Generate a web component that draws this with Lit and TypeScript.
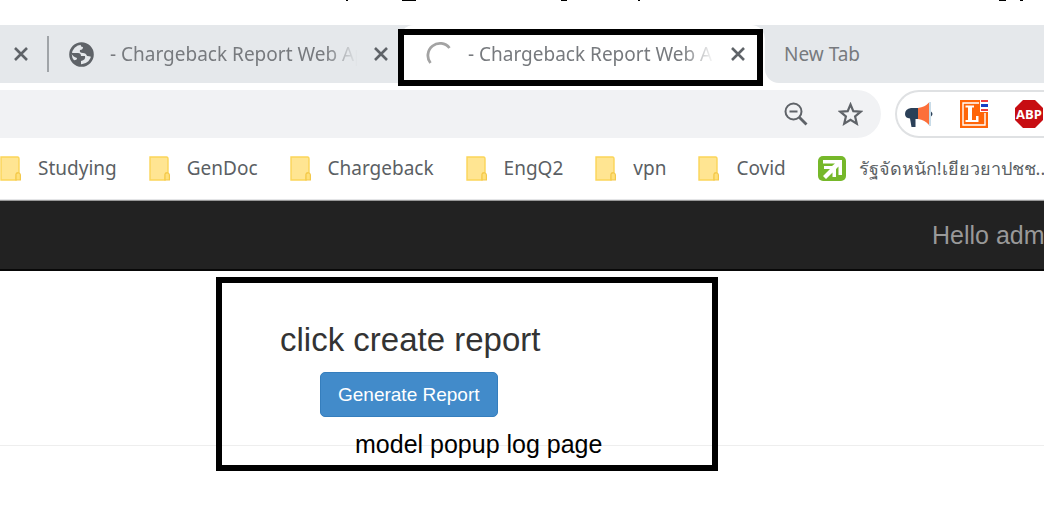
import { LitElement, html, svg, css } from "lit";
import { customElement } from "lit/decorators.js";

const closeIcon = html`<svg width="14" height="14" viewBox="0 0 14 14" aria-hidden="true"><path d="M1 1 13 13M13 1 1 13" fill="none" stroke="#5f6368" stroke-width="2.6"/></svg>`;
const folderIcon = html`<svg width="21" height="25" viewBox="0 0 21 25" aria-hidden="true"><path d="M1 1H17.500Q19 1 19 3V17H17Q16 17.500 16 24H1Z" fill="#ffe592" stroke="#fbd558" stroke-width="1.400"/><path d="M16 24V18Q17 16.500 19 17Q20.400 17.500 20.400 19V24Z" fill="#ffe07a" stroke="#f3c84a" stroke-width="1.200"/></svg>`;
const folders = ["Studying", "GenDoc", "Chargeback", "EngQ2", "vpn", "Covid"];
const marks: [number, number, number][] = [[346, 2, 1], [402, 14, 1], [561, 6, 1], [638, 2, 1], [999, 7, 1], [1020, 3, 1]];

@customElement("app-root")
export class AppRoot extends LitElement {
  static styles = css`
    :host { display: block; position: relative; overflow: hidden; min-height: 100vh; background: #fff; font-family: "Noto Sans", sans-serif; color: #5f6368; }
    * { box-sizing: border-box; }
    svg { display: block; flex: none; }
    button { font: inherit; border: 0; padding: 0; background: none; color: inherit; }
    a { color: inherit; text-decoration: none; }
    .remnant { height: 25px; }
    .tabs { display: flex; height: 58px; background: #e5e8eb; font-size: 19px; color: #777a7e; }
    .tab { display: flex; align-items: center; white-space: nowrap; }
    .first { width: 47px; padding-left: 14px; }
    .second { width: 353px; padding: 0 12px 0 20px; border-left: 2px solid #a0a4a8; border-image: linear-gradient(transparent 12px, #a0a4a8 12px, #a0a4a8 46px, transparent 46px) 1; }
    .active { width: 365px; padding: 0 20px 0 26px; border-radius: 14px 14px 0 0; background: #fff; }
    .name { flex: 1; overflow: hidden; margin: 0 14px 0 16px; mask-image: linear-gradient(90deg, #000 86%, transparent 99%); }
    .restwrap { flex: 1; display: flex; background: linear-gradient(#e5e8eb 50%, #fff 50%); }
    .rest { flex: 1; padding-left: 19px; border-bottom-left-radius: 14px; background: #e5e8eb; }
    .toolbar { display: flex; height: 62px; padding-top: 7px; gap: 14px; }
    .address { flex: 1; height: 48px; display: flex; align-items: center; justify-content: flex-end; gap: 30px; padding-right: 18px; border-radius: 0 24px 24px 0; background: #f1f2f4; }
    .address input { flex: 1; min-width: 0; border: 0; background: none; }
    .extensions { width: 149px; height: 48px; display: flex; align-items: center; gap: 27px; padding-left: 8px; border: 2px solid #dfe1e3; border-right: 0; border-radius: 24px 0 0 24px; }
    .bookmarks { display: flex; align-items: center; height: 55px; padding-bottom: 8px; gap: 32px; font-size: 19px; color: #5b5f64; border-bottom: 1px solid #e4e5e7; white-space: nowrap; }
    .bookmark { display: flex; align-items: center; gap: 17px; flex: none; }
    .thai { gap: 13px; font-size: 18px; }
    .navbar { height: 71px; display: flex; align-items: center; justify-content: flex-end; background: #222; border-top: 1px solid #999; border-bottom: 2px solid #080808; font: 25px "Liberation Sans", sans-serif; color: #999; white-space: nowrap; overflow: hidden; }
    .hello { width: 112px; }
    main { font-family: "Liberation Sans", sans-serif; height: 175px; padding: 48px 0 0 280px; border-bottom: 1px solid #eee; }
    h1 { margin: 0; font-size: 33px; line-height: 42px; font-weight: 400; color: #333; }
    .generate { display: block; height: 45px; margin: 11px 0 0 40px; padding: 0 17px; border: 1px solid #357ebd; border-radius: 5px; background: #428bca; color: #fff; font-size: 19px; }
    .note { margin: 12px 0 0 75px; font-size: 25px; line-height: 30px; color: #000; }
    .frame { position: absolute; border: 6px solid #000; pointer-events: none; }
    .frame-tab { left: 398px; top: 29px; width: 365px; height: 57px; }
    .frame-page { left: 216px; top: 277px; width: 502px; height: 194px; }
  `;

  render() {
    return html`
      <svg class="remnant" width="1044" height="25" aria-hidden="true">${marks.map(([x, w, h]) => svg`<rect x=${x} y="0" width=${w} height=${h}/>`)}</svg>
      <nav class="tabs" aria-label="Tabs">
        <div class="tab first"><button aria-label="Close tab">${closeIcon}</button></div>
        <div class="tab second">
          <svg width="25" height="25" viewBox="0 0 25 25" aria-hidden="true"><circle cx="12.500" cy="12.500" r="11" fill="none" stroke="#5f6368" stroke-width="2.600"/><path d="M12 2Q18 1 21 5T23 15Q20 14 18 14Q17 11 14 11Q10 11 11 8Q14 8 14 5Q11 5 12 2ZM2 11H9Q12 11 12 14H16Q17 18 12 19V23Q6 23 3 18Q8 19 8 16Q4 15 2 11Z" fill="#5f6368"/></svg>
          <span class="name">- Chargeback Report Web App</span><button aria-label="Close tab">${closeIcon}</button>
        </div>
        <div class="tab active">
          <svg width="26" height="26" viewBox="0 0 26 26" aria-hidden="true"><path d="M4.500 22A11.500 11.500 0 0 1 23.500 7" fill="none" stroke="#a3a3a3" stroke-width="2.800"/></svg>
          <span class="name">- Chargeback Report Web App</span><button aria-label="Close tab">${closeIcon}</button>
        </div>
        <div class="restwrap"><div class="tab rest">New Tab</div></div>
      </nav>
      <div class="toolbar">
        <div class="address"><input type="text" aria-label="Address" />
          <button aria-label="Zoom"><svg width="24" height="24" viewBox="0 0 24 24"><circle cx="9.500" cy="9.500" r="8" fill="none" stroke="#5f6368" stroke-width="2"/><path d="M5.500 9.500H13.500" stroke="#5f6368" stroke-width="2"/><path d="M15 15 22.500 22.500" stroke="#5f6368" stroke-width="2.800"/></svg></button>
          <button aria-label="Bookmark this page"><svg width="25" height="25" viewBox="0 0 25 25"><path d="M12.500 2.500 15.300 9.100 22.700 9.700 17.100 14.500 18.800 21.700 12.500 17.900 6.200 21.700 7.900 14.500 2.300 9.700 9.700 9.100Z" fill="none" stroke="#5f6368" stroke-width="2.200"/></svg></button>
        </div>
        <div class="extensions">
          <button aria-label="Announcements"><svg width="28" height="28" viewBox="0 0 28 28"><path d="M13 8H6Q0 9 0 14Q0 18 5 18.500L6.500 27H10.500V19H13Z" fill="#2b4058"/><path d="M13 8Q20 7 24 2.500V25Q20 20 13 19Z" fill="#fc6f3a"/><path d="M24 2H26V26H24Z" fill="#c9dce8"/><path d="M26 11.500Q29 14 26 16.500Z" fill="#2b4058"/></svg></button>
          <button aria-label="Dictionary"><svg width="28" height="28" viewBox="0 0 28 28"><path d="M0 0H28V28H0Z" fill="#ff6508"/><path d="M19 3H3V25H25V13" fill="none" stroke="#fff" stroke-width="1.400"/><path d="M5.500 5.500H14V7.500H12V20H16V16H18.500V22H5.500V20H8V7.500H5.500Z" fill="#fff"/><path d="M20 0H28V12H20Z" fill="#fff"/><path d="M21 0H28V2H21ZM21 9H28V11H21Z" fill="#ef3f3f"/><path d="M21 4H28V7H21Z" fill="#1a3fc4"/></svg></button>
          <button aria-label="Ad blocker"><svg width="28" height="28" viewBox="0 0 28 28"><path d="M8 0H20L28 8V20L20 28H8L0 20V8Z" fill="#c70d12"/><text x="14" y="18.500" text-anchor="middle" font-family="Open Sans" font-size="13" font-weight="700" fill="#fff">ABP</text></svg></button>
        </div>
      </div>
      <nav class="bookmarks" aria-label="Bookmarks">
        ${folders.map((f) => html`<a class="bookmark" href="#">${folderIcon}<span>${f}</span></a>`)}
        <a class="bookmark thai" href="#"><svg width="28" height="25" viewBox="0 0 28 25" aria-hidden="true"><rect width="28" height="25" rx="5" fill="#76b82a"/><path d="M5 4H24V19H20.500V10.500L18 13V21H14.500V16.500L8 23L5 20L12 13H6V10H14L17 7.500H5Z" fill="#fff"/></svg><span>รัฐจัดหนัก!เยียวยาปชช...</span></a>
      </nav>
      <header class="navbar"><span class="hello">Hello admin</span></header>
      <main>
        <h1>click create report</h1>
        <button class="generate">Generate Report</button>
        <p class="note">model popup log page</p>
      </main>
      <div class="frame frame-tab"></div>
      <div class="frame frame-page"></div>
    `;
  }
}
